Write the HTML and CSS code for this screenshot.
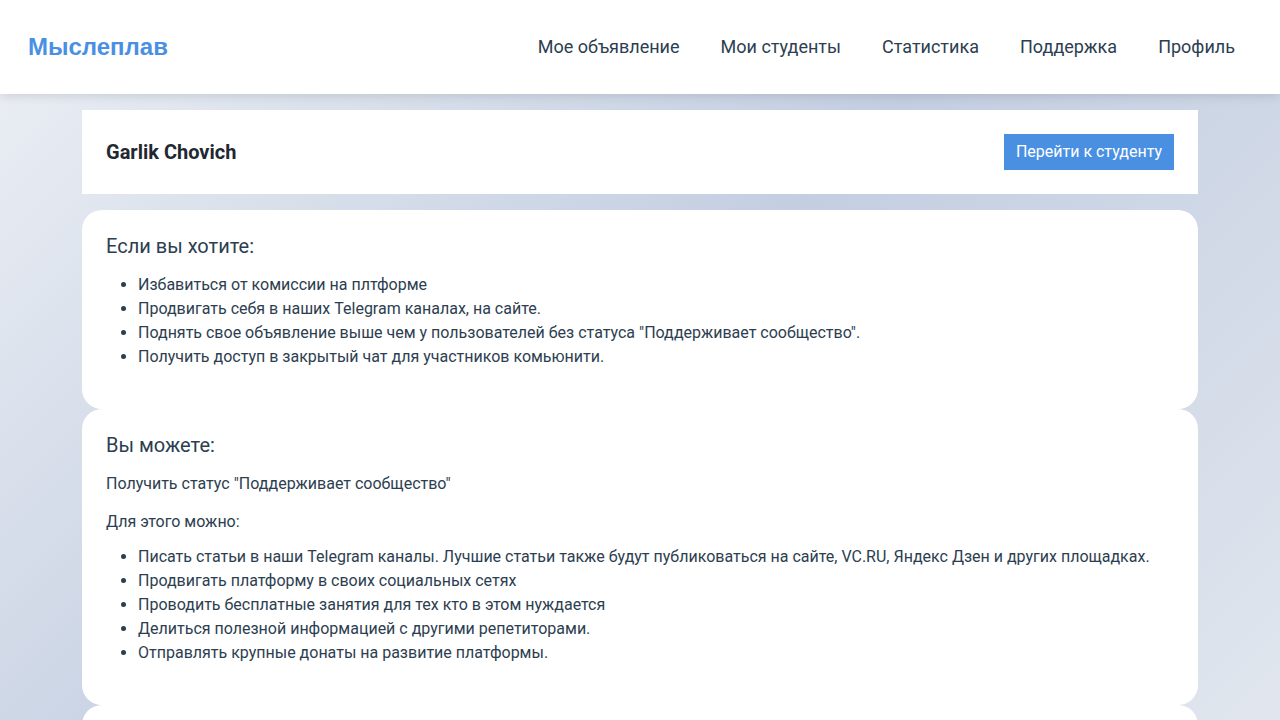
FILE: index.html
```html
<!DOCTYPE html>
<html lang="ru">
<head>
<meta charset="utf-8">
<title>Мыслеплав</title>
<link rel="stylesheet" href="styles.css">
</head>
<body>
<header class="navbar">
  <a class="logo" href="#">Мыслеплав</a>
  <nav class="nav-links">
    <a href="#">Мое объявление</a>
    <a href="#">Мои студенты</a>
    <a href="#">Статистика</a>
    <a href="#">Поддержка</a>
    <a href="#">Профиль</a>
  </nav>
</header>
<main class="container">
  <section class="student-card">
    <h2 class="student-name">Garlik Chovich</h2>
    <a class="btn" href="#">Перейти к студенту</a>
  </section>
  <section class="info-card">
    <h3 class="info-title">Если вы хотите:</h3>
    <ul class="info-list">
      <li>Избавиться от комиссии на плтформе</li>
      <li>Продвигать себя в наших Telegram каналах, на сайте.</li>
      <li>Поднять свое объявление выше чем у пользователей без статуса "Поддерживает сообщество".</li>
      <li>Получить доступ в закрытый чат для участников комьюнити.</li>
    </ul>
  </section>
  <section class="info-card">
    <h3 class="info-title">Вы можете:</h3>
    <p class="info-text">Получить статус "Поддерживает сообщество"</p>
    <p class="info-text">Для этого можно:</p>
    <ul class="info-list">
      <li>Писать статьи в наши Telegram каналы. Лучшие статьи также будут публиковаться на сайте, VC.RU, Яндекс Дзен и других площадках.</li>
      <li>Продвигать платформу в своих социальных сетях</li>
      <li>Проводить бесплатные занятия для тех кто в этом нуждается</li>
      <li>Делиться полезной информацией с другими репетиторами.</li>
      <li>Отправлять крупные донаты на развитие платформы.</li>
    </ul>
  </section>
  <section class="info-card info-card-empty"></section>
</main>
</body>
</html>
```

FILE: styles.css
```css
* {
  box-sizing: border-box;
}

html {
  min-height: 100%;
  background: linear-gradient(135deg, #edf0f5 0%, #c3cee1 50%, #e1e6ee 100%) fixed;
}

body {
  margin: 0;
  font-family: Roboto, "Noto Sans", sans-serif;
  color: #2c3e50;
}

a {
  text-decoration: none;
}

.navbar {
  height: 94px;
  background: #ffffff;
  display: flex;
  align-items: center;
  justify-content: space-between;
  padding: 0 45px 0 28px;
  box-shadow: 0 2px 10px rgba(0, 0, 0, 0.12);
  position: relative;
  z-index: 1;
}

.logo {
  font-family: "Liberation Sans", Arial, sans-serif;
  font-weight: 700;
  font-size: 24px;
  color: #4a90e2;
}

.nav-links {
  display: flex;
  gap: 41px;
  margin-bottom: 2px;
}

.nav-links a {
  font-size: 18px;
  color: #2c3e50;
}

.container {
  width: 1116px;
  margin: 16px auto 0;
}

.student-card {
  background: #ffffff;
  padding: 24px;
  display: flex;
  align-items: center;
  justify-content: space-between;
  margin-bottom: 16px;
}

.student-name {
  margin: 0;
  font-size: 20px;
  font-weight: 700;
  color: #222831;
}

.btn {
  background: #4a90e2;
  color: #ffffff;
  font-size: 16px;
  line-height: 20px;
  padding: 8px 12px;
}

.info-card {
  background: #ffffff;
  border-radius: 20px;
  padding: 24px;
}

.info-card-empty {
  min-height: 200px;
}

.info-title {
  margin: 0 0 15px;
  font-size: 20px;
  line-height: 24px;
  font-weight: 400;
}

.info-text {
  margin: 0 0 14px;
  font-size: 16px;
  line-height: 24px;
}

.info-list {
  margin: 0 0 16px;
  padding-left: 32px;
  font-size: 16px;
  line-height: 24px;
}

.info-text + .info-list {
  margin-top: -3px;
  margin-bottom: 16px;
}
```
